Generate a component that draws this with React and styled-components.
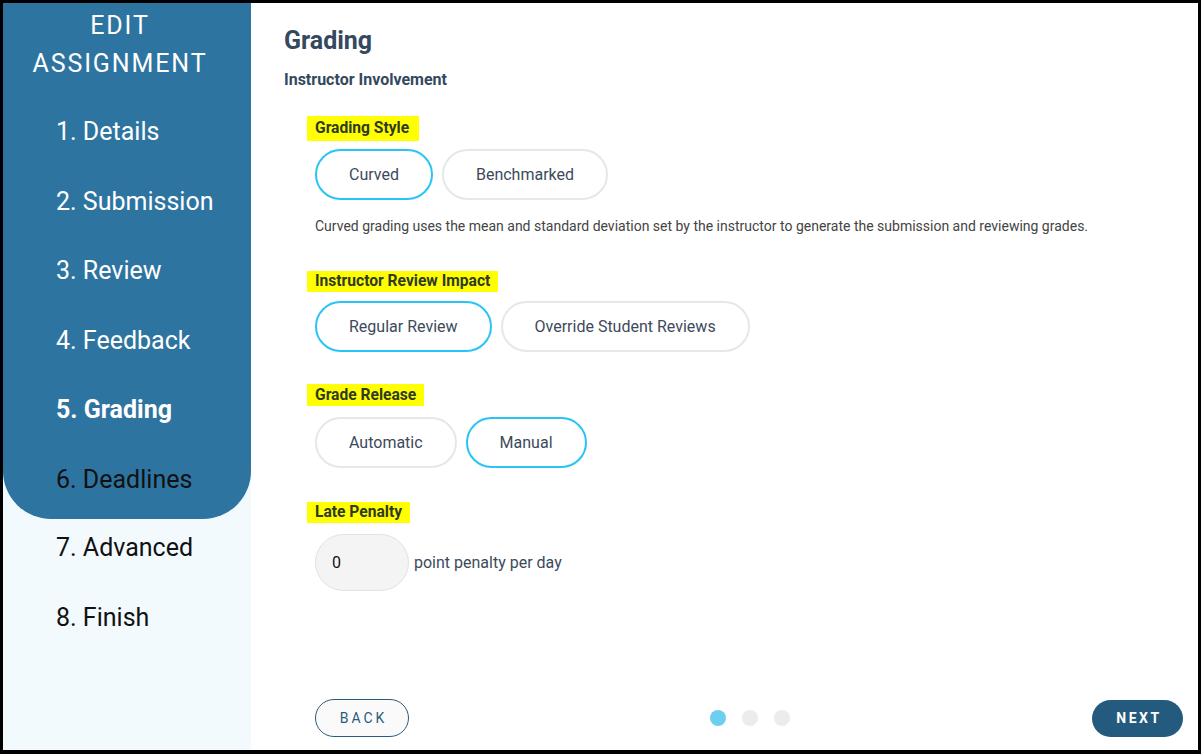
import React from "react";
import styled, { createGlobalStyle } from "styled-components";

const GlobalStyle = createGlobalStyle`
  html, body {
    margin: 0;
    padding: 0;
    background: #ffffff;
  }
  * { box-sizing: border-box; }
  body {
    font-family: Roboto, "Liberation Sans", sans-serif;
  }
`;

const Frame = styled.div`
  width: 1201px;
  height: 754px;
  border: 3px solid #000;
  border-bottom-width: 4px;
  display: flex;
  overflow: hidden;
  background: #fff;
`;

const Sidebar = styled.aside`
  width: 248px;
  flex: 0 0 248px;
  background: #f3fafd;
  display: flex;
  flex-direction: column;
`;

const SidebarPanel = styled.div`
  background: #2e74a0;
  border-radius: 0 0 48px 48px;
  padding: 4px 0 5px;
`;

const SidebarTitle = styled.h1`
  margin: 0 0 14px;
  padding-right: 14px;
  text-align: center;
  color: #fff;
  font-size: 25px;
  font-weight: 400;
  line-height: 38px;
  letter-spacing: 1.9px;
  text-transform: uppercase;
`;

const NavList = styled.ol`
  list-style: none;
  margin: ${(p) => (p.$overlap ? "-6px 0 0" : "0")};
  padding: 0;
`;

const NavItem = styled.li`
  height: 69.5px;
  line-height: 69.5px;
  padding-left: 53px;
  font-size: 25px;
  font-weight: ${(p) => (p.$active ? 700 : 400)};
  color: ${(p) => (p.$light ? "#ffffff" : "#111111")};
  white-space: nowrap;
`;

const Main = styled.main`
  flex: 1;
  display: flex;
  flex-direction: column;
  padding: 24px 15px 13px 33px;
`;

const Title = styled.h2`
  margin: 0;
  font-size: 25px;
  line-height: 28px;
  font-weight: 700;
  color: #34495e;
`;

const Subtitle = styled.h3`
  margin: 16px 0 0;
  font-size: 16px;
  line-height: 18px;
  font-weight: 700;
  color: #34495e;
`;

const Settings = styled.div`
  padding-left: 31px;
  display: flex;
  flex-direction: column;
`;

const Group = styled.section`
  margin-top: ${(p) => p.$gap}px;
  display: flex;
  flex-direction: column;
  align-items: flex-start;
`;

const Label = styled.span`
  display: inline-block;
  margin-left: -8px;
  padding: 0 ${(p) => (p.$h > 24 ? 10 : 8)}px 0 8px;
  height: ${(p) => p.$h}px;
  line-height: ${(p) => p.$h}px;
  background: #ffff00;
  color: #2f3a24;
  font-size: 15.6px;
  font-weight: 700;
`;

const OptionRow = styled.div`
  display: flex;
  align-items: center;
  gap: 9px;
  margin-top: ${(p) => p.$gap}px;
`;

const Option = styled.button`
  height: 51px;
  padding: 0 32px;
  border-radius: 26px;
  border: 2px solid ${(p) => (p.$selected ? "#29c4f6" : "#e7e7e7")};
  background: #fff;
  color: #3d4a5b;
  font-family: inherit;
  font-size: 16px;
  font-weight: 400;
  cursor: pointer;
`;

const Hint = styled.p`
  margin: 18px 0 0;
  font-size: 14px;
  line-height: 16px;
  color: #444;
`;

const PenaltyInput = styled.input`
  width: 94px;
  height: 57px;
  padding: 0 0 0 16px;
  border-radius: 29px;
  border: 1px solid #e2e2e2;
  background: #f4f4f4;
  color: #111;
  font-family: inherit;
  font-size: 16px;
  outline: none;
`;

const PenaltyUnit = styled.span`
  margin-left: -4px;
  font-size: 16px;
  color: #3d4a5b;
`;

const Footer = styled.footer`
  margin-top: auto;
  display: grid;
  grid-template-columns: 1fr auto 1fr;
  align-items: center;
  padding-left: 33px;
`;

const BackButton = styled.button`
  justify-self: start;
  margin-left: -2px;
  width: 94px;
  height: 38px;
  border-radius: 19px;
  border: 1px solid #2b5b7c;
  background: #fafafa;
  color: #2b5b7c;
  font-family: inherit;
  font-size: 14px;
  letter-spacing: 3px;
  padding: 0 0 0 3px;
  cursor: pointer;
`;

const NextButton = styled.button`
  justify-self: end;
  width: 91px;
  height: 37px;
  border-radius: 19px;
  border: none;
  background: #245a7d;
  color: #fff;
  font-family: inherit;
  font-size: 14px;
  font-weight: 700;
  letter-spacing: 2.5px;
  padding: 0 0 0 3px;
  cursor: pointer;
`;

const Dots = styled.div`
  display: flex;
  gap: 16px;
`;

const Dot = styled.span`
  width: 16px;
  height: 16px;
  border-radius: 50%;
  background: ${(p) => (p.$active ? "#6dcff0" : "#ececec")};
`;

const steps = [
  "Details",
  "Submission",
  "Review",
  "Feedback",
  "Grading",
  "Deadlines",
  "Advanced",
  "Finish",
];

export default function App() {
  const current = 4;
  return (
    <>
      <GlobalStyle />
      <Frame>
        <Sidebar>
          <SidebarPanel>
            <SidebarTitle>
              Edit
              <br />
              Assignment
            </SidebarTitle>
            <NavList>
              {steps.slice(0, 6).map((s, i) => (
                <NavItem key={s} $active={i === current} $light={i <= current}>
                  {i + 1}. {s}
                </NavItem>
              ))}
            </NavList>
          </SidebarPanel>
          <NavList $overlap>
            {steps.slice(6).map((s, i) => (
              <NavItem key={s}>
                {i + 7}. {s}
              </NavItem>
            ))}
          </NavList>
        </Sidebar>

        <Main>
          <Title>Grading</Title>
          <Subtitle>Instructor Involvement</Subtitle>
          <Settings>
            <Group $gap={27}>
              <Label $h={25}>Grading Style</Label>
              <OptionRow $gap={8}>
                <Option $selected>Curved</Option>
                <Option>Benchmarked</Option>
              </OptionRow>
              <Hint>
                Curved grading uses the mean and standard deviation set by the
                instructor to generate the submission and reviewing grades.
              </Hint>
            </Group>

            <Group $gap={37}>
              <Label $h={21}>Instructor Review Impact</Label>
              <OptionRow $gap={9}>
                <Option $selected>Regular Review</Option>
                <Option>Override Student Reviews</Option>
              </OptionRow>
            </Group>

            <Group $gap={32}>
              <Label $h={22}>Grade Release</Label>
              <OptionRow $gap={11}>
                <Option>Automatic</Option>
                <Option $selected>Manual</Option>
              </OptionRow>
            </Group>

            <Group $gap={34}>
              <Label $h={21}>Late Penalty</Label>
              <OptionRow $gap={11}>
                <PenaltyInput defaultValue="0" />
                <PenaltyUnit>point penalty per day</PenaltyUnit>
              </OptionRow>
            </Group>
          </Settings>

          <Footer>
            <BackButton>BACK</BackButton>
            <Dots>
              <Dot $active />
              <Dot />
              <Dot />
            </Dots>
            <NextButton>NEXT</NextButton>
          </Footer>
        </Main>
      </Frame>
    </>
  );
}
